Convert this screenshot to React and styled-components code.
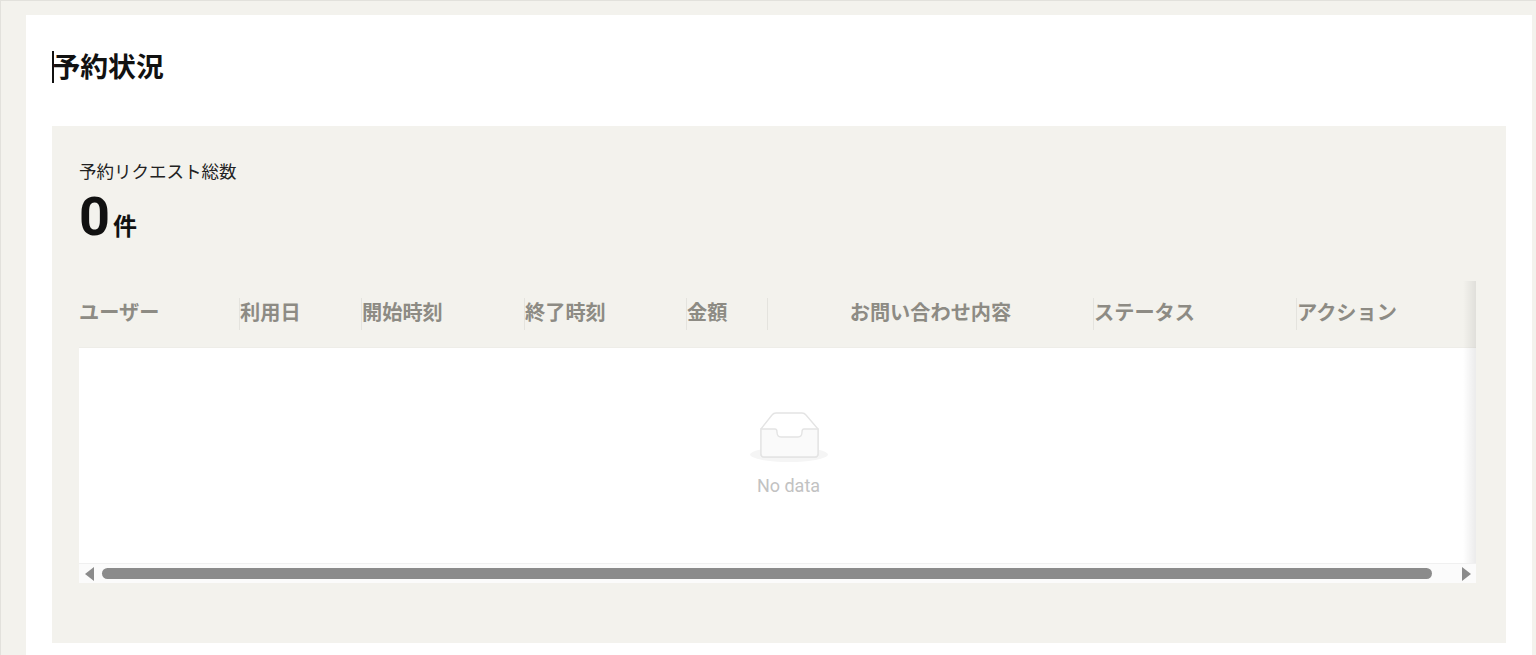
import React from "react";
import styled, { createGlobalStyle } from "styled-components";

const GlobalStyle = createGlobalStyle`
  html, body {
    margin: 0;
    padding: 0;
    height: 100%;
    overflow: hidden;
    background: #f3f2ed;
  }
  * { box-sizing: border-box; }
  body {
    font-family: "Noto Sans CJK JP", "Noto Sans", sans-serif;
    color: #111;
  }
`;

const Page = styled.div`
  height: 655px;
  padding: 14px 4px 0 25px;
  border-top: 1px solid #e2e1dc;
  border-left: 1px solid #e2e1dc;
`;

const Sheet = styled.main`
  background: #fff;
  height: 640px;
  padding: 36px 26px 0;
`;

const TitleLine = styled.div`
  display: flex;
  align-items: center;
  height: 32px;
`;

const Caret = styled.span`
  width: 1.5px;
  height: 32px;
  background: #111;
  margin-right: -1px;
`;

const Title = styled.h1`
  margin: 0 0 4px;
  font-size: 27.8px;
  line-height: 30px;
  font-weight: 700;
  color: #111;
`;

const Panel = styled.section`
  margin-top: 43px;
  height: 517px;
  background: #f3f2ed;
  padding: 34px 30px 0 27px;
`;

const TotalLabel = styled.div`
  font-size: 17.5px;
  line-height: 22px;
  color: #222;
`;

const TotalRow = styled.div`
  display: flex;
  align-items: baseline;
  height: 60px;
  margin-top: 3px;
`;

const TotalValue = styled.span`
  font-family: Roboto, "Noto Sans", sans-serif;
  font-size: 54px;
  line-height: 64px;
  font-weight: 700;
  color: #111;
`;

const TotalUnit = styled.span`
  font-size: 24px;
  font-weight: 700;
  margin-left: 3px;
  color: #111;
`;

const TableWrap = styled.div`
  position: relative;
  margin-top: 36px;
`;

const HeaderRow = styled.div`
  display: grid;
  grid-template-columns: 160px 122px 163px 162px 81px 326px 203px 180px;
  height: 67px;
  align-items: center;
  border-bottom: 1px solid #eeede8;
`;

const HeaderCell = styled.div`
  font-size: 20.2px;
  font-weight: 700;
  color: #8d8b84;
  line-height: 28px;
  padding-bottom: 4px;
  text-align: ${(p) => (p.$center ? "center" : "left")};
  border-left: ${(p) => (p.$first ? "none" : "1px solid #e4e3de")};
`;

const TableBody = styled.div`
  height: 215px;
  background: #fff;
  display: flex;
  flex-direction: column;
  align-items: center;
  padding: 61px 0 0 22px;
`;

const EmptyText = styled.div`
  margin-top: 11px;
  font-family: Roboto, sans-serif;
  font-size: 18px;
  line-height: 24px;
  color: #c2c2c2;
`;

const EdgeShadow = styled.div`
  position: absolute;
  top: 0;
  right: 0;
  bottom: 20px;
  width: 13px;
  background: linear-gradient(to left, rgba(0, 0, 0, 0.08), rgba(0, 0, 0, 0));
  pointer-events: none;
`;

const ScrollBar = styled.div`
  display: flex;
  align-items: center;
  height: 20px;
  background: #fbfbfb;
  border-top: 1px solid #f0f0f0;
  padding: 0 5px 0 6px;
`;

const ScrollThumb = styled.div`
  flex: 1;
  height: 11px;
  margin: 0 30px 0 8px;
  border-radius: 6px;
  background: #8b8b8b;
`;

const Arrow = styled.span`
  width: 0;
  height: 0;
  border-top: 7px solid transparent;
  border-bottom: 7px solid transparent;
  ${(p) =>
    p.$right
      ? "border-left: 9px solid #8b8b8b;"
      : "border-right: 9px solid #8b8b8b;"}
`;

const columns = [
  { label: "ユーザー" },
  { label: "利用日" },
  { label: "開始時刻" },
  { label: "終了時刻" },
  { label: "金額" },
  { label: "お問い合わせ内容", center: true },
  { label: "ステータス" },
  { label: "アクション" },
];

function EmptyIcon() {
  return (
    <svg width="80" height="54" viewBox="0 0 80 54" fill="none">
      <ellipse cx="40" cy="45.5" rx="39" ry="7.5" fill="#f5f5f5" />
      <path
        d="M12 20 L23 6 Q24.5 4 27 4 L53 4 Q55.5 4 57 6 L69 20 L69 45 Q69 48 66 48 L15 48 Q12 48 12 45 Z"
        fill="#fff"
        stroke="#e4e4e4"
        strokeWidth="1.4"
      />
      <path
        d="M12 20 L26 20 Q28 20 28 23 Q28 28 32 28 L49 28 Q53 28 53 23 Q53 20 55 20 L69 20 L69 45 Q69 48 66 48 L15 48 Q12 48 12 45 Z"
        fill="#fafafa"
        stroke="#e4e4e4"
        strokeWidth="1.4"
      />
    </svg>
  );
}

export default function App() {
  return (
    <>
      <GlobalStyle />
      <Page>
        <Sheet>
          <TitleLine>
            <Caret />
            <Title>予約状況</Title>
          </TitleLine>
          <Panel>
            <TotalLabel>予約リクエスト総数</TotalLabel>
            <TotalRow>
              <TotalValue>0</TotalValue>
              <TotalUnit>件</TotalUnit>
            </TotalRow>
            <TableWrap>
              <HeaderRow>
                {columns.map((c, i) => (
                  <HeaderCell key={c.label} $first={i === 0} $center={c.center}>
                    {c.label}
                  </HeaderCell>
                ))}
              </HeaderRow>
              <TableBody>
                <EmptyIcon />
                <EmptyText>No data</EmptyText>
              </TableBody>
              <ScrollBar>
                <Arrow />
                <ScrollThumb />
                <Arrow $right />
              </ScrollBar>
              <EdgeShadow />
            </TableWrap>
          </Panel>
        </Sheet>
      </Page>
    </>
  );
}
